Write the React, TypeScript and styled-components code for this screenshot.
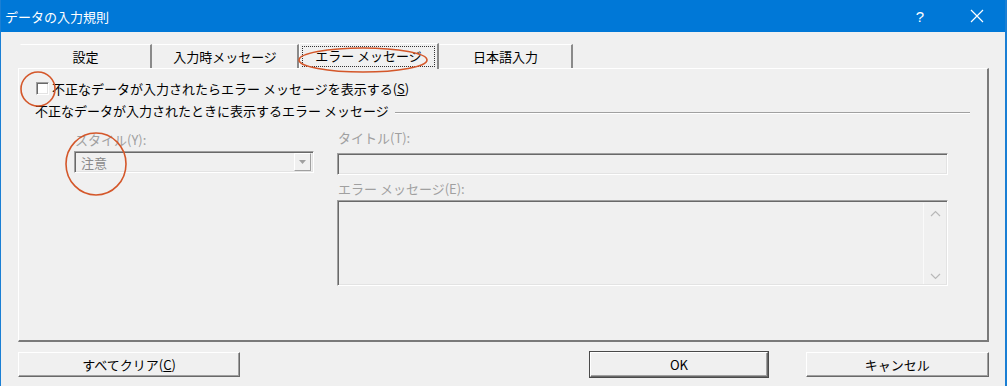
import React from "react";
import styled, { createGlobalStyle } from "styled-components";

const GlobalStyle = createGlobalStyle`
    html, body {
        margin: 0;
        padding: 0;
        background: #f0f0f0;
    }
    body {
        font-family: "Noto Sans CJK JP", "Liberation Sans", sans-serif;
        font-size: 13px;
        color: #000;
    }
`;

const Window = styled.div`
    position: relative;
    width: 1007px;
    height: 386px;
    box-sizing: border-box;
    border-left: 1px solid #1a7fd4;
    border-right: 2px solid #1a7fd4;
    background: #f0f0f0;
    display: flex;
    flex-direction: column;
    overflow: hidden;
`;

const TitleBar = styled.div`
    height: 32px;
    flex-shrink: 0;
    background: #0078d7;
    color: #fff;
    display: flex;
    align-items: center;
    padding-left: 4px;
    font-size: 13px;
`;

const Title = styled.div`
    flex: 1;
    line-height: 1;
`;

const Help = styled.div`
    width: 30px;
    margin-right: 19px;
    text-align: center;
    font-family: "Liberation Sans", sans-serif;
    font-size: 15px;
`;

const CloseButton = styled.div`
    width: 46px;
    height: 32px;
    margin-right: 5px;
    display: flex;
    align-items: center;
    justify-content: center;
`;

const Body = styled.div`
    padding: 10px 16px 0 17px;
    display: flex;
    flex-direction: column;
`;

const TabStrip = styled.div`
    display: flex;
    height: 26px;
    align-items: flex-end;
    padding-left: 2px;
`;

const Tab = styled.div<{ $width: number; $active?: boolean }>`
    width: ${(p) => p.$width}px;
    height: ${(p) => (p.$active ? 26 : 24)}px;
    box-sizing: border-box;
    display: flex;
    align-items: center;
    justify-content: center;
    white-space: nowrap;
    border-top: 1px solid #fff;
    border-left: 1px solid ${(p) => (p.$active ? "#fff" : "transparent")};
    border-right: 2px solid #8a8a8a;
    background: #f0f0f0;
    position: relative;
    z-index: ${(p) => (p.$active ? 1 : 0)};
    margin-bottom: ${(p) => (p.$active ? -1 : 0)}px;
`;

const FocusText = styled.span`
    border: 1px dotted #333;
    padding: 1px 12px 2px;
    line-height: 16px;
    white-space: nowrap;
`;

const Panel = styled.div`
    height: 274px;
    box-sizing: border-box;
    border-top: 1px solid #fff;
    border-left: 1px solid #fff;
    border-right: 2px solid #7a7a7a;
    border-bottom: 2px solid #7a7a7a;
    padding: 11px 0 0 17px;
    display: flex;
    flex-direction: column;
`;

const CheckRow = styled.label`
    display: flex;
    align-items: center;
    gap: 3px;
    height: 16px;
`;

const CheckBox = styled.span`
    width: 13px;
    height: 13px;
    box-sizing: border-box;
    border-top: 1px solid #a0a0a0;
    border-left: 1px solid #a0a0a0;
    border-right: 1px solid #fff;
    border-bottom: 1px solid #fff;
    box-shadow: inset 1px 1px 0 #696969, inset -1px -1px 0 #e3e3e3;
    background: #fff;
`;

const GroupHeader = styled.div`
    display: flex;
    align-items: center;
    gap: 6px;
    margin: 6px 17px 0 -1px;
    height: 16px;
`;

const Etched = styled.div`
    flex: 1;
    height: 0;
    border-top: 1px solid #a0a0a0;
    border-bottom: 1px solid #fff;
    margin-top: 6px;
`;

const Fields = styled.div`
    display: grid;
    grid-template-columns: 240px 611px;
    column-gap: 23px;
    padding-left: 38px;
    margin-top: 10px;
`;

const Column = styled.div`
    display: flex;
    flex-direction: column;
`;

const FieldLabel = styled.div<{ $gap: number }>`
    color: #a0a0a0;
    height: 16px;
    line-height: 16px;
    margin-top: ${(p) => p.$gap}px;
    padding-left: 1px;
`;

const Sunken = styled.div<{ $height: number; $top: number }>`
    height: ${(p) => p.$height}px;
    margin-top: ${(p) => p.$top}px;
    box-sizing: border-box;
    border-top: 1px solid #a0a0a0;
    border-left: 1px solid #a0a0a0;
    border-right: 1px solid #fff;
    border-bottom: 1px solid #fff;
    box-shadow: inset 1px 1px 0 #696969, inset -1px -1px 0 #e3e3e3;
    background: #f0f0f0;
    display: flex;
    align-items: center;
    position: relative;
`;

const ComboText = styled.span`
    flex: 1;
    padding-left: 6px;
    color: #8a8a8a;
`;

const DropButton = styled.span`
    width: 17px;
    height: 18px;
    margin-right: 2px;
    box-sizing: border-box;
    border-top: 1px solid #fff;
    border-left: 1px solid #fff;
    border-right: 1px solid #a0a0a0;
    border-bottom: 1px solid #a0a0a0;
    display: flex;
    align-items: center;
    justify-content: center;
`;

const ScrollBar = styled.div`
    position: absolute;
    top: 2px;
    right: 1px;
    bottom: 1px;
    width: 23px;
    border-left: 1px solid #fafafa;
    display: flex;
    flex-direction: column;
    justify-content: space-between;
    align-items: center;
    padding: 7px 0 4px;
    box-sizing: border-box;
`;

const ButtonRow = styled.div`
    display: flex;
    margin-top: 10px;
    height: 25px;
`;

const Button = styled.div<{ $width: number; $default?: boolean }>`
    width: ${(p) => p.$width}px;
    box-sizing: border-box;
    display: flex;
    align-items: center;
    justify-content: center;
    border-top: 1px solid #fff;
    border-left: 1px solid #fff;
    border-right: 1px solid #696969;
    border-bottom: 1px solid #696969;
    box-shadow: inset -1px -1px 0 #a0a0a0
        ${(p) => (p.$default ? ", 0 0 0 1px #4a4a4a" : "")};
    background: #f0f0f0;
`;

const Spacer = styled.div<{ $width: number }>`
    width: ${(p) => p.$width}px;
    flex-shrink: 0;
`;

const Overlay = styled.svg`
    position: absolute;
    left: 0;
    top: 0;
    z-index: 10;
    pointer-events: none;
`;

const Arrow = ({ d }: { d: string }) => (
    <svg width="11" height="7" viewBox="0 0 11 7">
        <path d={d} fill="none" stroke="#b8b8b8" strokeWidth="1.2" />
    </svg>
);

export default function App() {
    return (
        <>
            <GlobalStyle />
            <Window>
                <TitleBar>
                    <Title>データの入力規則</Title>
                    <Help>?</Help>
                    <CloseButton>
                        <svg width="14" height="14" viewBox="0 0 14 14">
                            <path d="M1 1L13 13M13 1L1 13" stroke="#fff" strokeWidth="1.2" />
                        </svg>
                    </CloseButton>
                </TitleBar>
                <Body>
                    <TabStrip>
                        <Tab $width={132}>設定</Tab>
                        <Tab $width={147}>入力時メッセージ</Tab>
                        <Tab $width={140} $active>
                            <FocusText>エラー メッセージ</FocusText>
                        </Tab>
                        <Tab $width={134}>日本語入力</Tab>
                    </TabStrip>
                    <Panel>
                        <CheckRow>
                            <CheckBox />
                            <span>
                                不正なデータが入力されたらエラー メッセージを表示する(<u>S</u>)
                            </span>
                        </CheckRow>
                        <GroupHeader>
                            <span>不正なデータが入力されたときに表示するエラー メッセージ</span>
                            <Etched />
                        </GroupHeader>
                        <Fields>
                            <Column>
                                <FieldLabel $gap={4}>スタイル(Y):</FieldLabel>
                                <Sunken $height={22} $top={3}>
                                    <ComboText>注意</ComboText>
                                    <DropButton>
                                        <svg width="7" height="4" viewBox="0 0 7 4">
                                            <path d="M0 0H7L3.5 4Z" fill="#a0a0a0" />
                                        </svg>
                                    </DropButton>
                                </Sunken>
                            </Column>
                            <Column>
                                <FieldLabel $gap={2}>タイトル(T):</FieldLabel>
                                <Sunken $height={22} $top={7} />
                                <FieldLabel $gap={6}>エラー メッセージ(E):</FieldLabel>
                                <Sunken $height={86} $top={3}>
                                    <ScrollBar>
                                        <Arrow d="M1 6L5.5 1.5L10 6" />
                                        <Arrow d="M1 1L5.5 5.5L10 1" />
                                    </ScrollBar>
                                </Sunken>
                            </Column>
                        </Fields>
                    </Panel>
                    <ButtonRow>
                        <Button $width={223}>
                            すべてクリア(<u>C</u>)
                        </Button>
                        <Spacer $width={350} />
                        <Button $width={178} $default>
                            OK
                        </Button>
                        <Spacer $width={38} />
                        <Button $width={184}>キャンセル</Button>
                    </ButtonRow>
                </Body>
                <Overlay width="1007" height="386" viewBox="0 0 1007 386">
                    <g fill="none" stroke="#d4572a" strokeWidth="1.6">
                        <ellipse cx="37" cy="89" rx="17" ry="17" />
                        <ellipse cx="362" cy="60" rx="64" ry="12" />
                        <ellipse cx="95" cy="164" rx="30" ry="31" />
                    </g>
                </Overlay>
            </Window>
        </>
    );
}
